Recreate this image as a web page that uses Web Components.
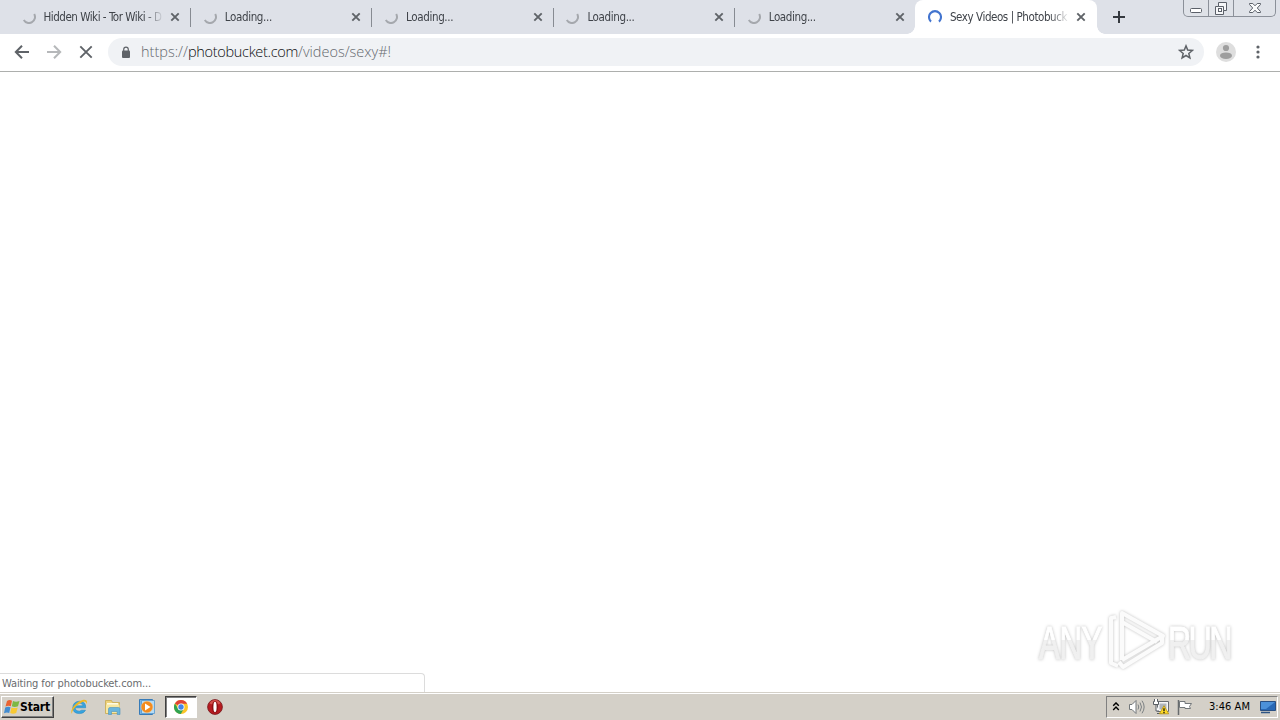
<!DOCTYPE html>
<html lang="en">
<head>
<meta charset="utf-8">
<title>Desktop</title>
<style>
  body {
    margin: 0;
    width: 1280px;
    height: 720px;
    overflow: hidden;
    background: #fff;
  }
</style>
</head>
<body>
<desktop-screen></desktop-screen>
<script>
// Single line of text, tracked so that it takes the given width.
class FitText extends HTMLElement {
  constructor() {
    super();
    this.attachShadow({ mode: 'open' });
    this.shadowRoot.innerHTML = `
      <style>
        :host { display: block; }
        span { display: inline-block; white-space: pre; }
      </style>
      <span><slot></slot></span>
    `;
  }

  connectedCallback() {
    const span = this.shadowRoot.querySelector('span');
    const target = Number(this.getAttribute('width'));
    const length = this.textContent.length;
    if (!target || !length) return;
    const width = span.getBoundingClientRect().width;
    span.style.letterSpacing = (target - width) / length + 'px';
  }
}

const ICONS = {
  back: ['0 0 16 16', '<path d="M15 8H2M8 1.7 1.8 8 8 14.3" fill="none" stroke="currentColor" stroke-width="2"/>'],
  forward: ['0 0 16 16', '<path d="M1 8h13M8 1.7 14.2 8 8 14.3" fill="none" stroke="currentColor" stroke-width="2"/>'],
  stop: ['0 0 16 16', '<path d="M2.3 2.3l11.4 11.4M13.7 2.3 2.3 13.7" fill="none" stroke="currentColor" stroke-width="1.9"/>'],
  close: ['0 0 10 10', '<path d="M1.3 1.3l7.4 7.4M8.7 1.3 1.3 8.7" fill="none" stroke="currentColor" stroke-width="1.9"/>'],
  plus: ['0 0 12 12', '<path d="M6 0v12M0 6h12" fill="none" stroke="currentColor" stroke-width="2"/>'],
  lock: ['0 0 10 13', '<path d="M2 4.6h6q1 0 1 1V11q0 1-1 1H2q-1 0-1-1V5.600q0-1 1-1z" fill="currentColor"/><path d="M2.700 5V3.400a2.300 2.300 0 0 1 4.600 0V5" fill="none" stroke="currentColor" stroke-width="1.200"/>'],
  star: ['0 0 16 16', '<path d="M8 1.900l1.700 4.200 4.600.35-3.500 2.950 1.100 4.500L8 11.500l-3.900 2.400 1.100-4.500-3.500-2.950 4.600-.35z" fill="none" stroke="currentColor" stroke-width="1.500"/>'],
  avatar: ['0 0 20 20', '<circle cx="10" cy="10" r="10" fill="#dedede"/><circle cx="10" cy="6" r="3.100" fill="#9e9e9e"/><ellipse cx="10" cy="13.700" rx="6" ry="3.300" fill="#9e9e9e"/>'],
  dots: ['0 0 4 14', '<g fill="currentColor"><circle cx="2" cy="2" r="1.600"/><circle cx="2" cy="7" r="1.600"/><circle cx="2" cy="12" r="1.600"/></g>'],
  loading: ['0 0 14 14', '<path d="M12.200 4A6 6 0 0 1 1.800 10" fill="none" stroke="#a5a8ad" stroke-width="2"/>'],
  busy: ['0 0 14 14', '<path d="M3 11.600A6 6 0 1 1 11 11.600" fill="none" stroke="#4274cf" stroke-width="2.100"/>'],
  minimize: ['0 0 14 14', '<rect x="1.500" y="8.500" width="11" height="4" rx="1" fill="#fff" stroke="#5b6069"/>'],
  restore: ['0 0 14 14', '<path d="M4.500 1.500h8v8h-3v4h-8v-8h3z" fill="#f6f7f9" stroke="#5b6069"/><path d="M4.500 5.500h5v4" fill="none" stroke="#5b6069"/><rect x="4.500" y="7.500" width="3" height="3" fill="#fff" stroke="#5b6069"/>'],
  exit: ['0 0 14 12', '<path d="M1.500 1.500h3.300L7 3.800l2.200-2.300h3.300v1L9.300 6l3.200 3.500v1H9.200L7 8.200l-2.200 2.300H1.500v-1L4.700 6 1.500 2.500z" fill="#f9fafb" stroke="#5b6069"/>'],
  windows: ['0 0 16 16', '<path d="M3 2Q5.500.3 8 1.700L6.800 7.200Q4.500 6 1.500 7.500z" fill="#ea6331"/><path d="M9 2q3 1.500 6.500-.1L14 7.200Q10.800 8.700 7.800 7.300z" fill="#7db844"/><path d="M1.200 8.500q2.800-1.500 5.300-.3L5.200 14Q3 12.800 0 14.200z" fill="#438cd0"/><path d="M7.500 8.500q3 1.200 6.200-.1l-1.500 5.600q-3.200 1.300-6 0z" fill="#f8c933"/>'],
  explorer: ['0 0 18 18', '<path d="M5 9.800h10.700Q16 3.200 9.500 3.200 3 3.400 2.700 10q.3 5.500 6.800 5.600 4.500 0 6-3.400h-4q-2 1.600-4.500.5-1.700-.8-2-2.900zm0-2Q6.500 5 9.300 5q3 .1 3.700 2.800z" fill="#36a4df" fill-rule="evenodd" stroke="#2180bd" stroke-width=".5"/><path d="M2 15.800C-1 13 6 2.900 13.500 1.700q4.800-.5 3 4.300Q16 2.300 12 4.200C6 7 2 12 2 15.800z" fill="#efb923"/>'],
  folder: ['0 0 18 18', '<path d="M1.500 2.500h6l1 2h7v11h-14z" fill="#eed27b" stroke="#c8a950" stroke-width=".8"/><path d="M3 5h11v4H3z" fill="#fffbe3"/><path d="M2 6.500h13.500V15H2z" fill="#f7e7a1"/><path d="M4.500 11q0-1.500 1.500-1.500h8.500q1.500 0 1.500 1.500v5.500h-2.800V13.500H7.500v3H4.500z" fill="#69b5dd" stroke="#4992be" stroke-width=".6"/>'],
  player: ['0 0 18 18', '<path d="M1.500 1.500h13v15h-13z" fill="#78b3e6" stroke="#377bb8"/><path d="M3.500 2.500h13v13h-13z" fill="#b4dbf5" stroke="#5698ce" stroke-width=".8"/><circle cx="9" cy="9" r="5.800" fill="#f38b1e" stroke="#f9c07e" stroke-width=".5"/><path d="M7 5.500v7L12.500 9z" fill="#fff"/>'],
  chrome: ['0 0 16 16', '<circle cx="8" cy="8" r="7" fill="#fbc529"/><path d="M8 8 1.900 4.500A7 7 0 0 1 14.100 4.700H8z" fill="#df4337"/><path d="M8 8 5.100 9.700 1.900 4.500A7 7 0 0 0 7.800 15L11 9.500z" fill="#2fa352"/><circle cx="8" cy="8" r="3.500" fill="#fff"/><circle cx="8" cy="8" r="2.700" fill="#4285e8"/>'],
  opera: ['0 0 18 18', '<circle cx="9" cy="9" r="7.400" fill="#b71b20" stroke="#74171a" stroke-width=".8"/><path d="M3.500 5.500Q5 2 9 2t5.500 3.500Q9 8 3.500 5.500z" fill="#d4524d"/><ellipse cx="9" cy="9" rx="3.200" ry="5.900" fill="#8c1013"/><ellipse cx="9" cy="9" rx="1.600" ry="5.200" fill="#fff"/>'],
  chevrons: ['0 0 8 10', '<path d="M1.200 3.700 4 .9l2.800 2.800M1.200 7.900 4 5.100l2.800 2.800" fill="none" stroke="#000" stroke-width="1.400"/>'],
  speaker: ['0 0 18 16', '<path d="M1.500 5.500H4L8 1.500v13l-4-4H1.500z" fill="#fff" stroke="#72777a"/><path d="M10 5.500q1.500 2.500 0 5M12 3.500q3 4.500 0 9M14 1.700q4.300 6.300 0 12.600" fill="none" stroke="#7b8083"/>'],
  network: ['0 0 18 18', '<path d="M5.500 3.500h11v10h-11z" fill="#f5f6f7" stroke="#686d72"/><path d="M7.500 5.500h7v6h-7z" fill="#aeb5bd"/><path d="M2.500 1v2.500h-1v3h5v-3h-1V1M4 6.500V13h3M5 15.500h5" fill="#fff" stroke="#585d62"/><path d="M12 7.700l4.700 8.100H7.400z" fill="#ffdb26" stroke="#b69113" stroke-width=".8"/><path d="M12 10.300v3M12 14v1.200" stroke="#111" stroke-width="1.300"/>'],
  flag: ['0 0 18 18', '<path d="M2.500 2v15" stroke="#676b6d" stroke-width="1.500"/><path d="M3.500 3.500h5.500v2h6.500l-2 3 1 2H9v-1H3.500z" fill="#fff" stroke="#72777a"/>'],
  display: ['0 0 16 14', '<path d="M.5 1.500h15v9H.5z" fill="#2868b5" stroke="#294f82"/><path d="M1 2h14L6 9H1z" fill="#4c91d9"/><path d="M1 12.500h9" stroke="#2e5484" stroke-width="1.500"/>']
};

class UiIcon extends HTMLElement {
  constructor() {
    super();
    this.attachShadow({ mode: 'open' });
  }

  connectedCallback() {
    const [box, shapes] = ICONS[this.getAttribute('name')];
    const [, , width, height] = box.split(' ');
    this.shadowRoot.innerHTML = `
      <style>
        :host { display: block; flex: none; width: ${width}px; height: ${height}px; }
        svg { display: block; width: 100%; height: 100%; }
      </style>
      <svg viewBox="${box}">${shapes}</svg>
    `;
  }
}

class BrowserTab extends HTMLElement {
  constructor() {
    super();
    this.attachShadow({ mode: 'open' });
  }

  connectedCallback() {
    const active = this.hasAttribute('active');
    this.shadowRoot.innerHTML = `
      <style>
        :host {
          display: flex;
          align-items: center;
          box-sizing: border-box;
          flex: none;
          width: 181.3px;
          height: 34px;
          padding-left: 12.500px;
          color: #3f4349;
          font: 11.500px/14px "DejaVu Sans";
          font-stretch: condensed;
        }
        :host([active]) {
          position: relative;
          background: #fff;
          border-radius: 8px 8px 0 0;
        }
        :host([active])::before, :host([active])::after {
          content: "";
          position: absolute;
          bottom: 0;
          width: 8px;
          height: 8px;
        }
        :host([active])::before {
          left: -8px;
          background: radial-gradient(circle at 0 0, transparent 7.500px, #fff 8px);
        }
        :host([active])::after {
          right: -8px;
          background: radial-gradient(circle at 100% 0, transparent 7.500px, #fff 8px);
        }
        .title {
          flex: none;
          width: 118.500px;
          margin-left: 8px;
          -webkit-mask-image: linear-gradient(90deg, #000 100px, transparent 120px);
        }
        .close { margin-left: 8px; color: #5f6368; }
        .line { width: 1px; height: 19px; margin-left: 10px; background: #878b92; }
        .line.none { visibility: hidden; }
      </style>
      <ui-icon name="${active ? 'busy' : 'loading'}"></ui-icon>
      <div class="title"><fit-text width="${this.getAttribute('fit')}">${this.textContent}</fit-text></div>
      <ui-icon class="close" name="close"></ui-icon>
      <div class="line ${this.hasAttribute('line') ? '' : 'none'}"></div>
    `;
  }
}

class WindowButtons extends HTMLElement {
  constructor() {
    super();
    this.attachShadow({ mode: 'open' });
    this.shadowRoot.innerHTML = `
      <style>
        :host {
          display: flex;
          box-sizing: border-box;
          width: 93px;
          height: 17px;
          border: 1px solid #8b9099;
          border-top: 0;
          border-radius: 0 0 5px 5px;
          background: #dfe2e8;
        }
        div { display: flex; justify-content: center; box-sizing: border-box; }
        .min { width: 24px; }
        .max { width: 26px; padding-top: 1px; border: 1px solid #8b9099; border-width: 0 1px; }
        .exit { flex: 1; padding-top: 2px; }
      </style>
      <div class="min"><ui-icon name="minimize"></ui-icon></div>
      <div class="max"><ui-icon name="restore"></ui-icon></div>
      <div class="exit"><ui-icon name="exit"></ui-icon></div>
    `;
  }
}

class TabStrip extends HTMLElement {
  constructor() {
    super();
    this.attachShadow({ mode: 'open' });
    this.shadowRoot.innerHTML = `
      <style>
        :host {
          display: flex;
          box-sizing: border-box;
          height: 34px;
          padding: 0 4px 0 9px;
          background: #dee1e8;
        }
        .new { margin: 11px auto 0 16px; color: #35393f; }
      </style>
      <browser-tab fit="118" line>Hidden Wiki - Tor Wiki - D</browser-tab>
      <browser-tab fit="47" line>Loading...</browser-tab>
      <browser-tab fit="47" line>Loading...</browser-tab>
      <browser-tab fit="47" line>Loading...</browser-tab>
      <browser-tab fit="47">Loading...</browser-tab>
      <browser-tab fit="117" active>Sexy Videos | Photobuck</browser-tab>
      <ui-icon class="new" name="plus"></ui-icon>
      <window-buttons></window-buttons>
    `;
  }
}

class BrowserToolbar extends HTMLElement {
  constructor() {
    super();
    this.attachShadow({ mode: 'open' });
    this.shadowRoot.innerHTML = `
      <style>
        :host {
          display: flex;
          align-items: center;
          box-sizing: border-box;
          height: 38px;
          padding: 0 20px 1px 14px;
          border-bottom: 1px solid #adafad;
          background: #fff;
          color: #5f6368;
        }
        .nav { display: flex; gap: 16px; width: 94px; }
        .off { color: #b6b8ba; }
        .address {
          display: flex;
          align-items: center;
          box-sizing: border-box;
          width: 1096px;
          height: 28px;
          padding: 0 10px 0 13px;
          border-radius: 14px;
          background: #f0f2f5;
        }
        .url {
          display: flex;
          margin: 0 auto 1px 10px;
          color: #64686d;
          font: 300 14.500px/20px "Open Sans", "Noto Sans", sans-serif;
        }
        .host { color: #0c0d0f; }
        .avatar { margin: 0 20px 0 12px; }
      </style>
      <div class="nav">
        <ui-icon name="back"></ui-icon>
        <ui-icon class="off" name="forward"></ui-icon>
        <ui-icon name="stop"></ui-icon>
      </div>
      <div class="address">
        <ui-icon name="lock"></ui-icon>
        <div class="url">
          <fit-text width="47">https://</fit-text>
          <fit-text class="host" width="110">photobucket.com</fit-text>
          <fit-text width="93">/videos/sexy#!</fit-text>
        </div>
        <ui-icon name="star"></ui-icon>
      </div>
      <ui-icon class="avatar" name="avatar"></ui-icon>
      <ui-icon name="dots"></ui-icon>
    `;
  }
}

class RunWatermark extends HTMLElement {
  constructor() {
    super();
    this.attachShadow({ mode: 'open' });
    this.shadowRoot.innerHTML = `
      <style>
        :host { display: block; width: 210px; height: 70px; }
        svg { display: block; filter: drop-shadow(0 0 1.500px rgba(0, 0, 0, .25)); }
        text { font: 46px "Liberation Sans", sans-serif; fill: url(#shine); stroke: url(#shine); }
      </style>
      <svg width="210" height="70" viewBox="0 0 210 70">
        <linearGradient id="shine" gradientUnits="userSpaceOnUse" x1="0" y1="0" x2="0" y2="70">
          <stop offset=".48" stop-color="#fff"/>
          <stop offset=".49" stop-color="#f0f0f0"/>
        </linearGradient>
        <text x="9" y="53" textLength="93" transform="translate(3 0) scale(.68 1)">ANY</text>
        <text x="0" y="53" textLength="92" transform="translate(138 0) scale(.7 1)">RUN</text>
        <g fill="none" stroke="#fbfbfb" stroke-width="4" stroke-linejoin="round">
          <path d="M86 11l-5 1v45l7 3"/>
          <path d="M92 54V7l41 23-41 24"/>
          <path d="M92 16l35 20M132 30v7L93 61l-4-5"/>
        </g>
      </svg>
    `;
  }
}

class TaskBar extends HTMLElement {
  constructor() {
    super();
    this.attachShadow({ mode: 'open' });
    this.shadowRoot.innerHTML = `
      <style>
        :host {
          display: flex;
          align-items: center;
          box-sizing: border-box;
          height: 28px;
          padding: 0 2px 0 1px;
          border-top: 1px solid #d4d0c8;
          box-shadow: inset 0 1px #fff;
          background: #d4d0c8;
          color: #000;
          font: 11px/14px "DejaVu Sans";
          font-stretch: condensed;
        }
        .start {
          display: flex;
          align-items: center;
          box-sizing: border-box;
          width: 53px;
          height: 22px;
          padding-left: 2px;
          border: 1px solid;
          border-color: #fff #404040 #404040 #fff;
          box-shadow: inset -1px -1px #808080;
          font-size: 12px;
          font-weight: bold;
        }
        .quick { display: flex; align-items: center; margin: 0 auto 0 16px; }
        .quick ui-icon { margin-right: 16px; }
        .pressed {
          display: flex;
          align-items: center;
          justify-content: center;
          box-sizing: border-box;
          width: 32px;
          height: 22px;
          margin: 0 9px 0 -7px;
          border: 1px solid;
          border-color: #404040 #fff #fff #404040;
          box-shadow: inset 1px 1px #808080;
          background: #fff;
        }
        .quick .pressed ui-icon { margin: 0; }
        .tray {
          display: flex;
          align-items: center;
          box-sizing: border-box;
          width: 172px;
          height: 22px;
          padding-left: 5px;
          border: 1px solid;
          border-color: #808080 #fff #fff #808080;
        }
      </style>
      <div class="start">
        <ui-icon name="windows"></ui-icon>
        <fit-text width="30">Start</fit-text>
      </div>
      <div class="quick">
        <ui-icon name="explorer"></ui-icon>
        <ui-icon name="folder"></ui-icon>
        <ui-icon name="player"></ui-icon>
        <div class="pressed"><ui-icon name="chrome"></ui-icon></div>
        <ui-icon name="opera"></ui-icon>
      </div>
      <div class="tray">
        <ui-icon name="chevrons"></ui-icon>
        <ui-icon name="speaker" style="margin-left: 8px"></ui-icon>
        <ui-icon name="network" style="margin-left: 6px"></ui-icon>
        <ui-icon name="flag" style="margin-left: 6px"></ui-icon>
        <fit-text width="41" style="margin-left: 15px">3:46 AM</fit-text>
        <ui-icon name="display" style="margin-left: 10px"></ui-icon>
      </div>
    `;
  }
}

class DesktopScreen extends HTMLElement {
  constructor() {
    super();
    this.attachShadow({ mode: 'open' });
    this.shadowRoot.innerHTML = `
      <style>
        :host { display: flex; flex-direction: column; width: 1280px; height: 720px; }
        .page { position: relative; flex: 1; background: #fff; }
        .status {
          position: absolute;
          left: 0;
          bottom: 0;
          box-sizing: border-box;
          width: 425px;
          height: 19px;
          padding: 3px 0 0 2px;
          border: 1px solid #dcdcdc;
          border-width: 1px 1px 0 0;
          border-radius: 0 4px 0 0;
          color: #696b6e;
          font: 11px/14px "DejaVu Sans";
          font-stretch: condensed;
        }
        run-watermark { position: absolute; left: 1030px; top: 534px; }
      </style>
      <tab-strip></tab-strip>
      <browser-toolbar></browser-toolbar>
      <div class="page">
        <run-watermark></run-watermark>
        <div class="status"><fit-text width="149">Waiting for photobucket.com...</fit-text></div>
      </div>
      <task-bar></task-bar>
    `;
  }
}

customElements.define('fit-text', FitText);
customElements.define('ui-icon', UiIcon);
customElements.define('browser-tab', BrowserTab);
customElements.define('window-buttons', WindowButtons);
customElements.define('tab-strip', TabStrip);
customElements.define('browser-toolbar', BrowserToolbar);
customElements.define('run-watermark', RunWatermark);
customElements.define('task-bar', TaskBar);
customElements.define('desktop-screen', DesktopScreen);
</script>
</body>
</html>
